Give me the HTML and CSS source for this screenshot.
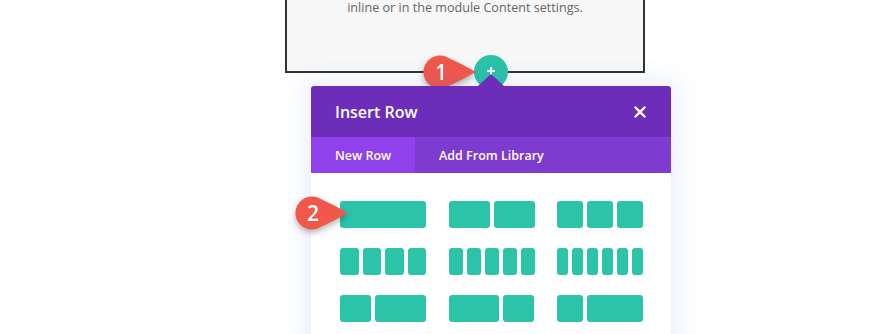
FILE: index.html
```html
<!DOCTYPE html>
<html>
<head>
    <meta charset="UTF-8">
    <title>Insert Row</title>
    <link rel="stylesheet" href="styles.css">
</head>
<body>
    <div class="module">
        <p class="module-text">inline or in the module Content settings.</p>
    </div>

    <div class="insert">
        <div class="add-button"><span class="plus"></span></div>

        <div class="step step-one">
            <svg class="drop" viewBox="0 0 54 34" width="54" height="34">
                <path d="M22 1.3 Q37 8 53 17 Q37 26 22 32.7 A16.5 16.5 0 1 1 22 1.3 Z" fill="#f1584b"/>
            </svg>
            <span class="step-num">1</span>
        </div>

        <div class="modal">
            <div class="modal-header">
                <span class="modal-title">Insert Row</span>
                <svg class="close" viewBox="0 0 12 12" width="12" height="12">
                    <path d="M1.5 1.5 L10.5 10.5 M10.5 1.5 L1.5 10.5" stroke="#fff" stroke-width="2.4" stroke-linecap="round"/>
                </svg>
            </div>
            <div class="tabs">
                <div class="tab active">New Row</div>
                <div class="tab">Add From Library</div>
            </div>
            <div class="layouts">
                <div class="layout" style="grid-template-columns: 1fr"><i></i></div>
                <div class="layout" style="grid-template-columns: 1fr 1fr"><i></i><i></i></div>
                <div class="layout" style="grid-template-columns: 1fr 1fr 1fr"><i></i><i></i><i></i></div>

                <div class="layout" style="grid-template-columns: repeat(4, 1fr)"><i></i><i></i><i></i><i></i></div>
                <div class="layout" style="grid-template-columns: repeat(5, 1fr)"><i></i><i></i><i></i><i></i><i></i></div>
                <div class="layout" style="grid-template-columns: repeat(6, 1fr)"><i></i><i></i><i></i><i></i><i></i><i></i></div>

                <div class="layout" style="grid-template-columns: 31fr 51fr"><i></i><i></i></div>
                <div class="layout" style="grid-template-columns: 49fr 31fr"><i></i><i></i></div>
                <div class="layout" style="grid-template-columns: 26fr 55fr"><i></i><i></i></div>
            </div>
        </div>

        <div class="step step-two">
            <svg class="drop" viewBox="0 0 54 34" width="54" height="34">
                <path d="M22 1.3 Q37 8 53 17 Q37 26 22 32.7 A16.5 16.5 0 1 1 22 1.3 Z" fill="#f1584b"/>
            </svg>
            <span class="step-num">2</span>
        </div>
    </div>
</body>
</html>
```

FILE: styles.css
```css
body {
    margin: 0;
    font-family: "Open Sans", sans-serif;
    background: #fff;
    overflow: hidden;
}
.module {
    box-sizing: border-box;
    width: 360px;
    height: 103px;
    margin: -30px 0 0 285px;
    padding-top: 24px;
    border: 2px solid #333;
    background: #f7f7f7;
    text-align: center;
}
.module-text {
    margin: 0;
    font-size: 12.6px;
    line-height: 24px;
    color: #666;
}
.insert {
    position: relative;
    width: 360px;
    margin: 13px 0 0 311px;
}
.add-button {
    position: absolute;
    top: -31px;
    left: 163px;
    width: 34px;
    height: 34px;
    border-radius: 50%;
    background: #2bc3a8;
}
.plus {
    position: absolute;
    left: 13px;
    top: 12px;
    width: 8px;
    height: 8px;
}
.plus::before,
.plus::after {
    content: "";
    position: absolute;
    background: #fff;
}
.plus::before {
    left: 0;
    top: 3px;
    width: 8px;
    height: 2px;
}
.plus::after {
    left: 3px;
    top: 0;
    width: 2px;
    height: 8px;
}
.modal {
    position: relative;
    background: #fff;
    height: 260px;
    border-radius: 3px 3px 0 0;
    box-shadow: 0 0 22px 8px rgba(43, 100, 218, 0.09);
}
.modal::before {
    content: "";
    position: absolute;
    top: -12px;
    left: 167px;
    border-left: 13px solid transparent;
    border-right: 13px solid transparent;
    border-bottom: 12px solid #6c2eb9;
}
.modal-header {
    display: flex;
    align-items: center;
    justify-content: space-between;
    height: 51px;
    padding: 0 24px;
    background: #6c2eb9;
    border-radius: 3px 3px 0 0;
}
.modal-title {
    color: #fff;
    font-size: 16px;
    font-weight: 600;
}
.close {
    display: block;
    margin-right: 1px;
}
.tabs {
    display: flex;
    height: 36px;
    background: #7e3bd0;
}
.tab {
    display: flex;
    align-items: center;
    padding: 0 24px;
    color: #fff;
    font-size: 12.5px;
    font-weight: 600;
    white-space: nowrap;
}
.tab.active {
    width: 104px;
    box-sizing: border-box;
    background: #8f42ec;
}
.layouts {
    display: grid;
    grid-template-columns: repeat(3, 86px);
    column-gap: 22.5px;
    row-gap: 20px;
    padding: 28px 29px;
}
.layout {
    display: grid;
    gap: 4px;
    height: 27px;
}
.layout i {
    display: block;
    background: #2bc4a8;
    border-radius: 3px;
}
.step {
    position: absolute;
    width: 54px;
    height: 34px;
    filter: drop-shadow(0 3px 3px rgba(0, 0, 0, 0.3));
}
.step-one {
    top: -31px;
    left: 112px;
}
.step-two {
    top: 110px;
    left: -16px;
}
.drop {
    position: absolute;
    left: 0;
    top: 0;
}
.step-num {
    position: absolute;
    left: 1px;
    top: 0;
    width: 34px;
    line-height: 34px;
    text-align: center;
    color: #fff;
    font-size: 21px;
    font-weight: 600;
}
```
